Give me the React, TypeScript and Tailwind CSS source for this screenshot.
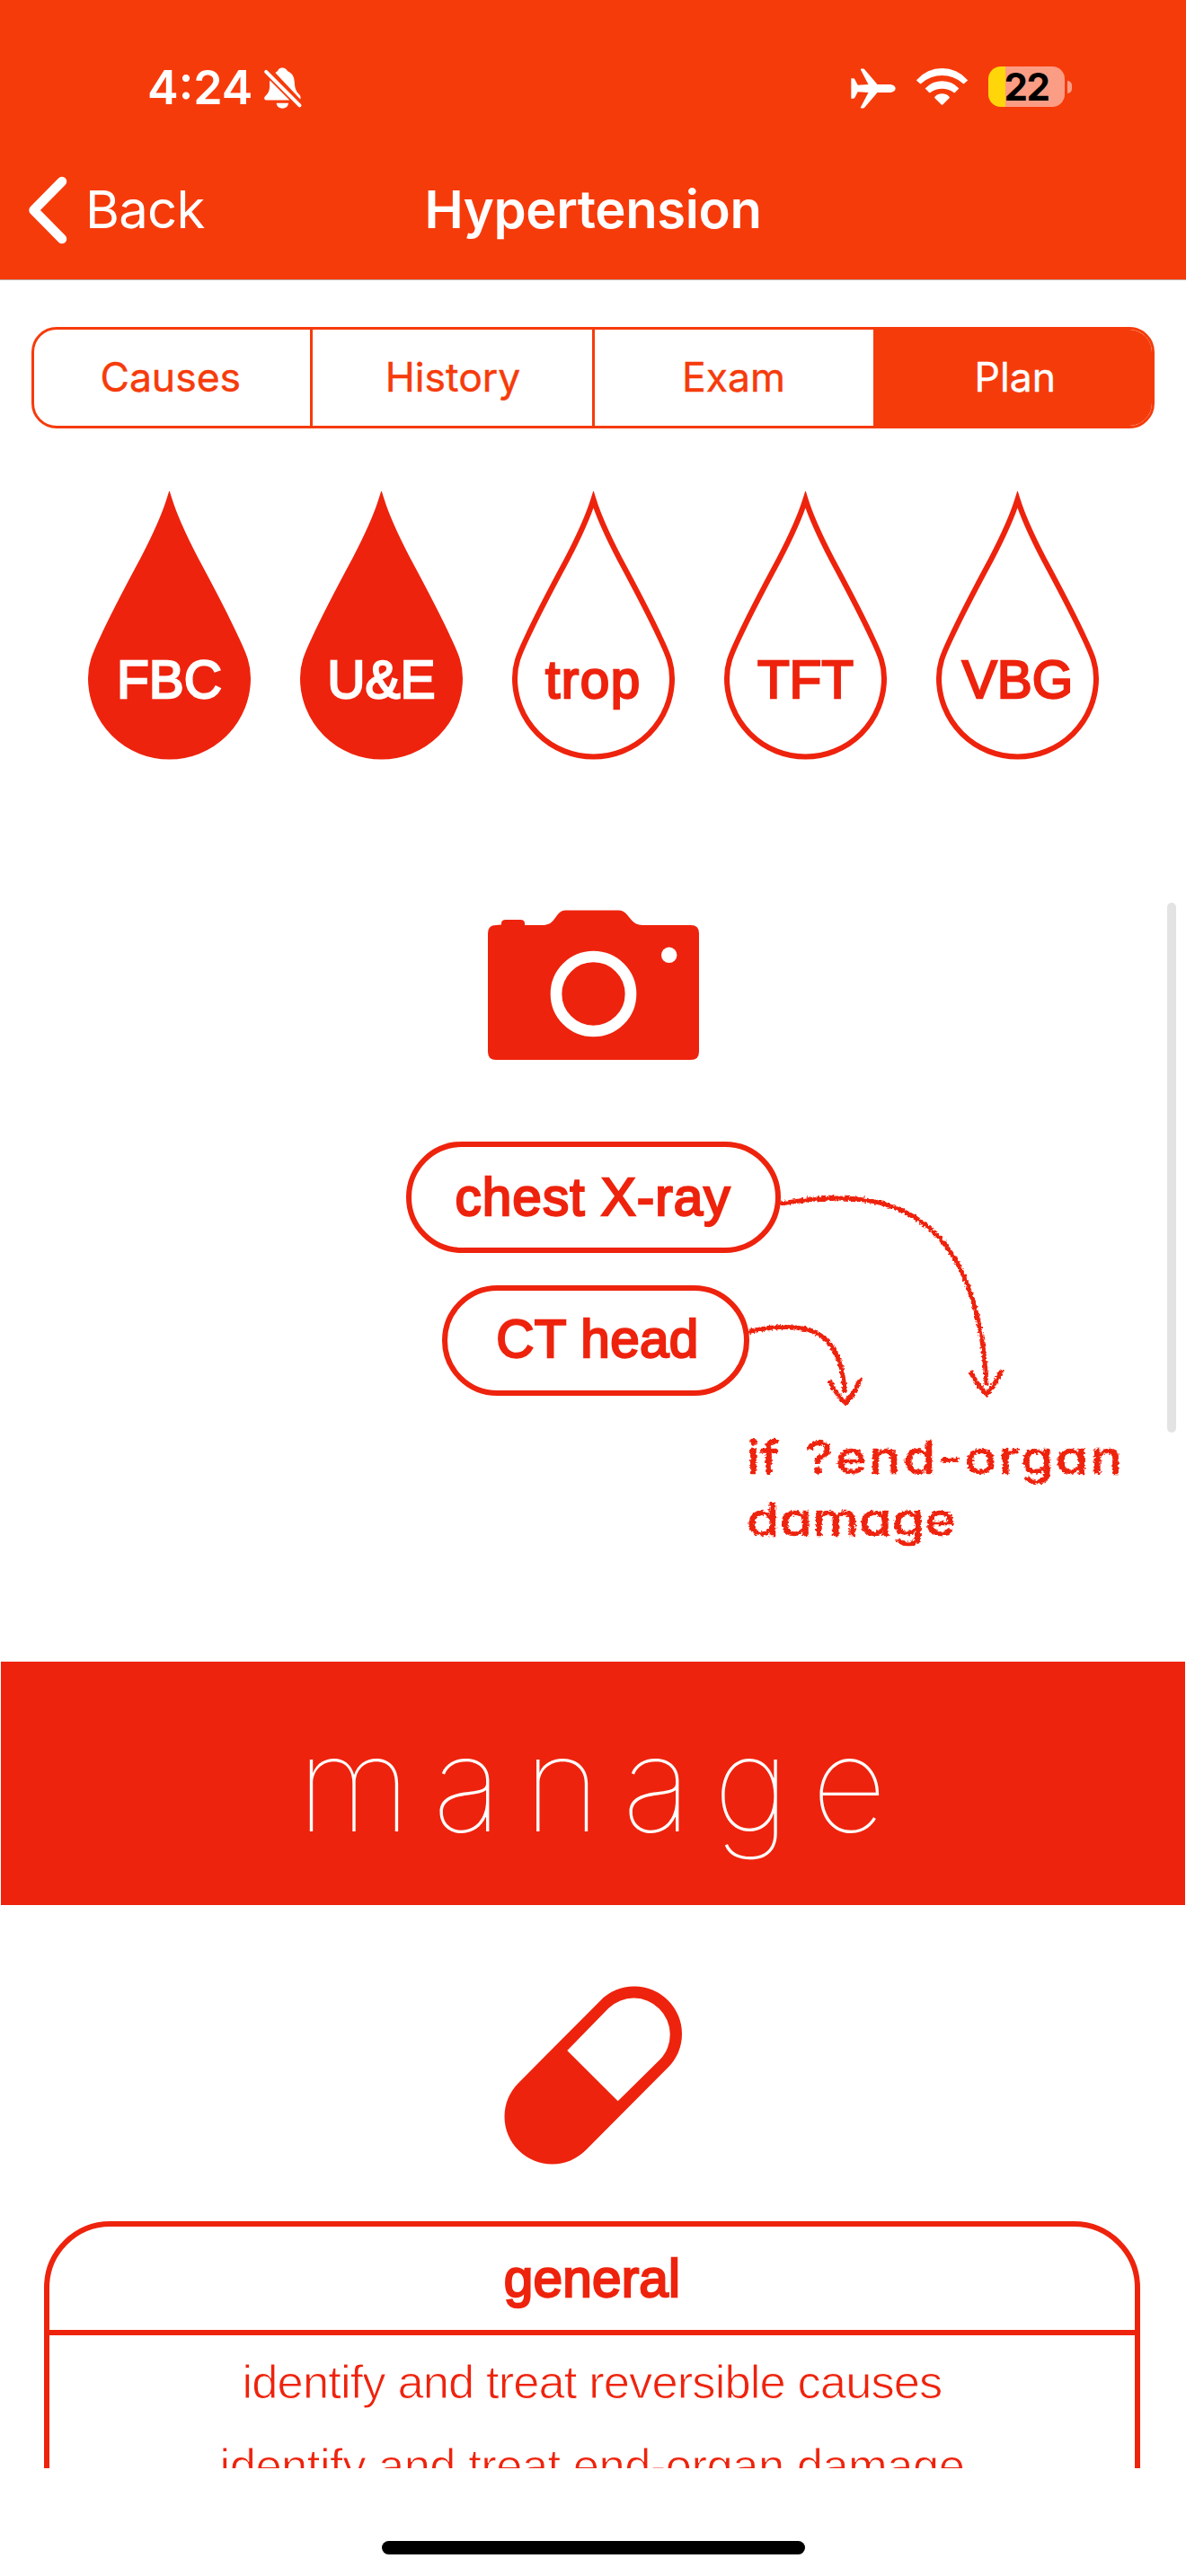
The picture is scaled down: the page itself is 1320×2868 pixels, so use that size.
import React from "react";

const tests = [
  { label: "FBC", filled: true },
  { label: "U&E", filled: true },
  { label: "trop", filled: false },
  { label: "TFT", filled: false },
  { label: "VBG", filled: false },
];

const tabs = [
  { label: "Causes", style: "border-r-[3px] border-[#f63b0b] pr-[3px]" },
  { label: "History", style: "border-r-[3px] border-[#f63b0b] pl-[2px]" },
  { label: "Exam", style: "" },
  { label: "Plan", style: "bg-[#f63b0b] pl-[6px] text-white" },
];

function StatusBar() {
  return (
    <div className="flex h-[52px] items-center pl-[164px] pr-[127px] text-white">
      <span className="text-[52px] leading-none font-semibold">4:24</span>
      <svg className="ml-3 h-[47px] w-11" viewBox="36 28 132 142" fill="#fff">
        <path d="M76 46C82 42 85 40 87 35C92 28 107 28 113 35C115 38 116 40 120 42C136 50 140 62 141 82C142 104 149 112 158 121C161 125 162 130 160 135Z" />
        <path d="M58 72L124 138H46C38 138 37 130 43 124C52 115 56 108 57 92C57 84 56 78 58 72Z" />
        <path d="M80 148H120C119 172 81 172 80 148Z" />
        <path d="M45 43L158 156" stroke="#fff" strokeWidth="12" strokeLinecap="round" />
      </svg>
      <div className="ml-auto flex items-center">
        <svg className="h-[45px] w-[50px]" viewBox="20 33 149 133" fill="#fff">
          <path d="M21 66H28Q31 66 33 69L43 88L78 86L52 36Q52 34 55 34H61Q64 34 66 37L108 86H152Q168 90 168 99.500Q168 109 152 113H108L66 162Q64 165 61 165H55Q52 165 52 163L78 113L43 111L33 130Q31 133 28 133H21Z" />
        </svg>
        <svg className="mr-[22px] ml-[22px] mb-1 h-[44px] w-[59px]" viewBox="237 27 176 132" fill="#fff">
          <path d="M241 71A112 112 0 0 1 409 71Q412 73 409 75L399 84Q397 86 394 83A104 104 0 0 0 256 83Q253 86 251 84L241 75Q238 73 241 71Z" />
          <path d="M271 98A76 76 0 0 1 379 98Q383 100 380 102L369 113Q366 116 363 113A66 66 0 0 0 287 113Q284 116 281 113L270 102Q267 100 271 98Z" />
          <path d="M301 128A34 34 0 0 1 349 128Q352 131 349 133L328 154Q325 157 322 154L301 133Q298 131 301 128Z" />
        </svg>
        <div className="mb-[3px] flex h-[45px] w-[85px] items-center justify-center rounded-[14px] bg-[linear-gradient(90deg,#ffd60a_19px,#fb9d85_19px)]">
          <span className="text-[42px] leading-none font-bold tracking-[-1.5px] text-black">22</span>
        </div>
        <div className="mb-[3px] ml-[3px] h-[14px] w-[5px] rounded-r-full bg-[#fb9d85]" />
      </div>
    </div>
  );
}

function NavBar() {
  return (
    <div className="mt-[72px] grid h-[76px] grid-cols-[1fr_auto_1fr] items-center text-[58px] leading-none text-white">
      <div className="flex items-center pl-[30px]">
        <svg className="h-[76px] w-[45px] shrink-0" viewBox="0 0 45 76" fill="none">
          <path d="M39 6L7.500 38L39 70" stroke="#fff" strokeWidth="10.500" strokeLinecap="round" strokeLinejoin="round" />
        </svg>
        <span className="-mt-[2px] ml-5 tracking-[-0.7px]">Back</span>
      </div>
      <h1 className="-mt-[2px] font-semibold tracking-[-0.4px]">Hypertension</h1>
      <span />
    </div>
  );
}

function Drop({ label, filled }: { label: string; filled: boolean }) {
  return (
    <div className={`relative flex h-[299px] w-[181px] justify-center pt-[181px] ${filled ? "text-white" : "text-[#ee230d]"}`}>
      <svg className="absolute inset-0 h-full w-full" viewBox="0 0 181 299">
        <path
          d="M90.500 9C97 30 108 53 120 76C134 102 154 140 165.500 165C174 183 178 193 178 208A87.500 87.500 0 0 1 3 208C3 193 7 183 15.500 165C27 140 47 102 61 76C73 53 84 30 90.500 9Z"
          fill={filled ? "#ee230d" : "none"}
          stroke="#ee230d"
          strokeWidth="6"
          strokeMiterlimit="10"
        />
      </svg>
      <span
        className={`relative text-[58.5px] leading-none [-webkit-text-stroke:2.3px_currentColor] ${label === "trop" ? "tracking-[1.5px]" : ""}`}
      >
        {label}
      </span>
    </div>
  );
}

function Camera() {
  return (
    <svg className="h-[167px] w-[235px]" viewBox="0 0 235 167">
      <path
        fill="#ee230d"
        d="M0 26Q0 17 9 17L15 16.500V15Q15 11 20 11H36Q41 11 41 15V17H61C77 17 74 0.500 87 0.500H145C158 0.500 157 17 172 17H226Q235 17 235 26V158Q235 167 226 167H9Q0 167 0 158Z"
      />
      <circle cx="117.500" cy="93.500" r="41.500" fill="none" stroke="#fff" strokeWidth="12.700" />
      <circle cx="201.700" cy="50.300" r="8.700" fill="#fff" />
    </svg>
  );
}

function Annotation() {
  return (
    <>
      <svg className="absolute top-[58px] left-[821px] h-[250px] w-[320px]" viewBox="820 1330 320 250" fill="none" stroke="#ee230d" strokeWidth="5" strokeLinecap="round">
        <defs>
          <filter id="chalk" x="-5%" y="-5%" width="110%" height="110%">
            <feTurbulence type="fractalNoise" baseFrequency="0.35" numOctaves="2" seed="4" />
            <feDisplacementMap in="SourceGraphic" scale="5" xChannelSelector="R" yChannelSelector="G" />
          </filter>
        </defs>
        <g filter="url(#chalk)">
          <path d="M868 1341C985 1320 1086 1345 1097 1542" />
          <path d="M1080 1530Q1087 1543 1097 1553Q1107 1542 1113 1528" />
          <path d="M834 1483C900 1470 935 1482 939 1550" />
          <path d="M923 1540Q930 1554 940 1563Q950 1552 956 1538" />
        </g>
      </svg>
      <p className="absolute top-[317px] left-[831px] origin-left scale-x-[1.15] font-['Inter',sans-serif] text-[51px] leading-[69px] font-medium whitespace-nowrap [filter:url(#chalk)] [-webkit-text-stroke:0.4px_currentColor] [font-feature-settings:'cv11']">
        <span className="mr-[11px]">if</span> <span className="tracking-[2.3px]">?end-organ</span>
        <br />
        <span className="tracking-[0.2px]">damage</span>
      </p>
    </>
  );
}

export default function App() {
  return (
    <div className="relative flex h-[2868px] w-[1320px] flex-col overflow-hidden bg-white font-['Liberation_Sans',Arial,sans-serif] text-[#ee230d]">
      <header className="h-[312px] shrink-0 border-b border-[#b9a9a5] bg-[#f63b0b] pt-[72px] font-['Inter',sans-serif]">
        <StatusBar />
        <NavBar />
      </header>

      <main className="h-[2436px] shrink-0 overflow-hidden">
        <div className="mx-[35px] mt-[52px] grid h-[113px] grid-cols-[309.5px_314px_310px_1fr] overflow-hidden rounded-[28px] border-[3.5px] border-[#f63b0b] font-['Inter',sans-serif] text-[44.5px] text-[#f63b0b] [-webkit-text-stroke:0.4px_currentColor]">
          {tabs.map((t) => (
            <div key={t.label} className={`flex items-center justify-center leading-none ${t.style}`}>
              {t.label}
            </div>
          ))}
        </div>

        <div className="mt-[70px] ml-[98px] flex gap-[55px]">
          {tests.map((t) => (
            <Drop key={t.label} {...t} />
          ))}
        </div>

        <div className="mt-[167px] flex justify-center">
          <Camera />
        </div>

        <section className="relative mt-[91px] flex h-[579px] flex-col items-center">
          <div className="flex h-[124px] w-[417px] items-center justify-center rounded-full border-[6px] border-[#ee230d] text-[58.5px] leading-none tracking-[1px] [-webkit-text-stroke:2.3px_currentColor]">
            chest X-ray
          </div>
          <div className="mt-9 flex h-[123px] w-[342px] translate-x-[3px] items-center justify-center rounded-full border-[6px] border-[#ee230d] pb-[2px] pl-1 text-[58.5px] leading-none tracking-[0.3px] [-webkit-text-stroke:2.3px_currentColor]">
            CT head
          </div>
          <Annotation />
        </section>

        <div className="mx-px flex h-[271px] items-center justify-center bg-[#ee230d] font-['Inter',sans-serif] text-[146px] leading-none font-thin text-white">
          <span className="pl-[22px] tracking-[24.5px]">manage</span>
        </div>

        <div className="mt-[90px] flex justify-center">
          <svg className="h-[199px] w-[199px]" viewBox="561 2211 199 199">
            <path d="M614.500 2356.500L706 2264.500" stroke="#ee230d" strokeWidth="106" strokeLinecap="round" />
            <path d="M631.300 2283L677.400 2235.700A40.500 40.500 0 0 1 734.800 2292.800L687.700 2339.300Z" fill="#fff" />
          </svg>
        </div>

        <div className="mx-auto mt-[63px] h-[600px] w-[1220px] translate-x-[-1px] rounded-[74px] border-6 border-[#ee230d] text-center">
          <h2 className="flex h-[121px] items-center justify-center border-b-6 border-[#ee230d] pt-[2px] text-[58.5px] leading-none tracking-[0.2px] [-webkit-text-stroke:2.3px_currentColor]">
            general
          </h2>
          <div className="pt-[5px] text-[52.5px] leading-[93px] [-webkit-text-stroke:0.9px_white]">
            <p className="tracking-[-0.9px]">identify and treat reversible causes</p>
            <p className="tracking-[-0.5px]">identify and treat end-organ damage</p>
          </div>
        </div>
      </main>

      <div className="mx-auto mt-[81px] h-[15px] w-[471px] rounded-full bg-black" />
      <div className="absolute top-[1005px] left-[1299px] h-[590px] w-[10px] rounded-full bg-[#e3e3e3]" />
    </div>
  );
}
